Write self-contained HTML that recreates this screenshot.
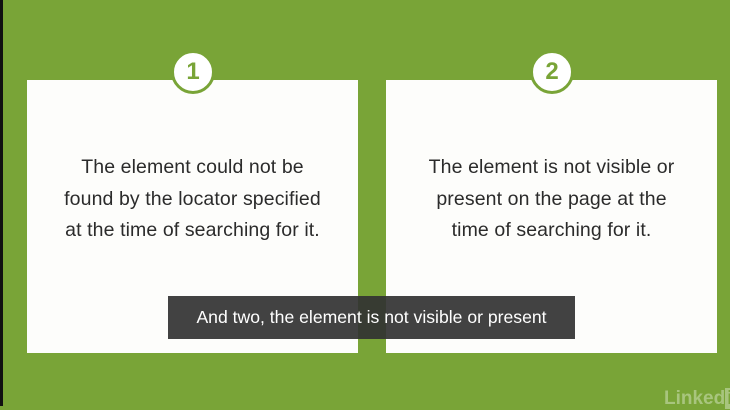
<!DOCTYPE html>
<html><head><style>
body{margin:0;width:730px;height:406px;overflow:hidden;background:#79a437;position:relative;font-family:"Liberation Sans",sans-serif}
.bl{position:absolute;left:0;top:0;width:3px;height:406px;background:#111}
.card{position:absolute;top:80px;width:331px;height:273px;background:#fdfdfb}
.txt{position:absolute;top:152px;width:331px;text-align:center;font-size:19.5px;line-height:31.5px;color:#2b2b2b;letter-spacing:0.1px}
.c{position:absolute;top:50px;width:38px;height:38px;border-radius:50%;background:#fff;border:3px solid #79a437;color:#79a437;font-size:24px;font-weight:bold;text-align:center;line-height:38px}
.cap{position:absolute;left:168px;top:296px;width:407px;height:43px;background:rgba(50,50,50,0.92);color:#fff;font-size:17.6px;text-align:center;line-height:43px}
.li{position:absolute;left:664px;top:388px;color:#a8c57e;font-weight:bold;font-size:19px}
</style></head><body>
<div class="bl"></div>
<div class="card" style="left:27px"></div>
<div class="card" style="left:386px"></div>
<div class="c" style="left:171px">1</div>
<div class="c" style="left:530px">2</div>
<div class="txt" style="left:27px">The element could not be<br>found by the locator specified<br>at the time of searching for it.</div>
<div class="txt" style="left:386px">The element is not visible or<br>present on the page at the<br>time of searching for it.</div>
<div class="cap">And two, the element is not visible or present</div>
<div class="li">Linked<span style="background:#a8c57e;color:#79a437;padding:0 2px">in</span></div>
</body></html>
